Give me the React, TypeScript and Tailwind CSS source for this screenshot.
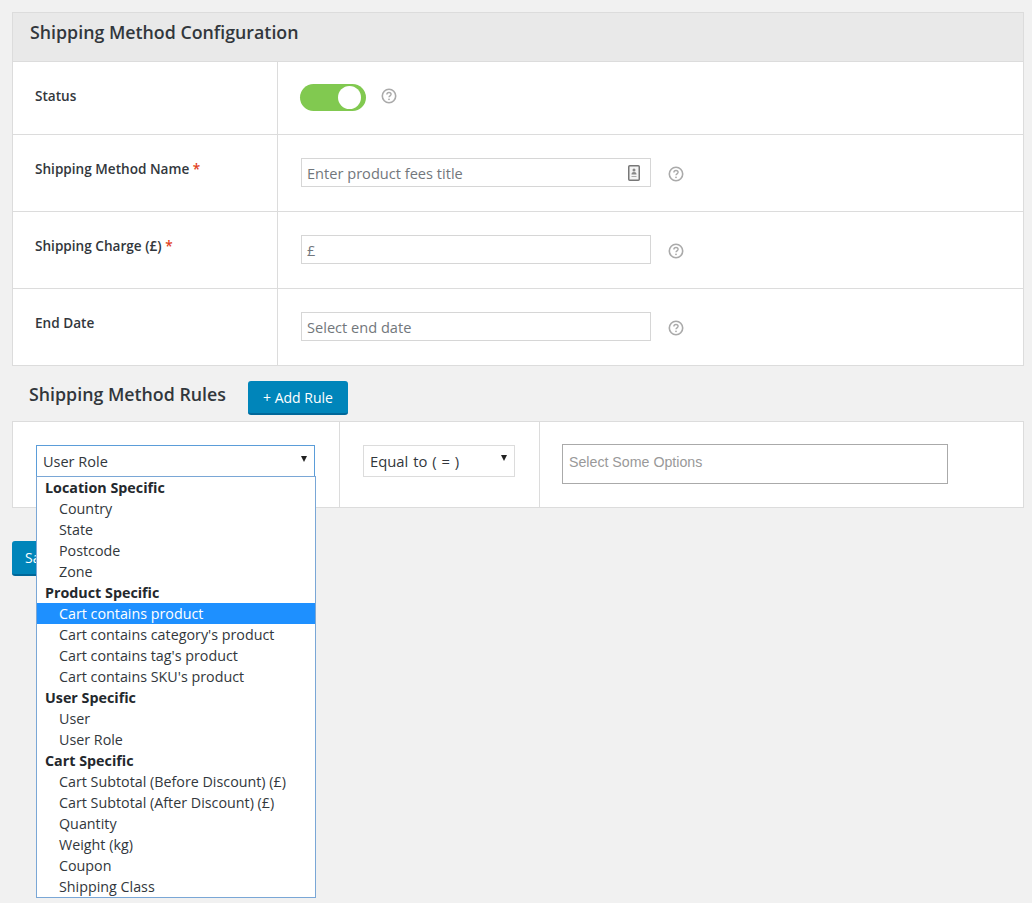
const FONT = "font-['Open_Sans','Noto_Sans',sans-serif]";

type Group = { label: string; items: string[] };

const GROUPS: Group[] = [
  { label: "Location Specific", items: ["Country", "State", "Postcode", "Zone"] },
  {
    label: "Product Specific",
    items: [
      "Cart contains product",
      "Cart contains category's product",
      "Cart contains tag's product",
      "Cart contains SKU's product",
    ],
  },
  { label: "User Specific", items: ["User", "User Role"] },
  {
    label: "Cart Specific",
    items: [
      "Cart Subtotal (Before Discount) (£)",
      "Cart Subtotal (After Discount) (£)",
      "Quantity",
      "Weight (kg)",
      "Coupon",
      "Shipping Class",
    ],
  },
];

function Help() {
  return (
    <svg width="16" height="16" viewBox="0 0 16 16" fill="none" className="shrink-0" aria-hidden>
      <circle cx="8" cy="8" r="6.7" stroke="#aaa" strokeWidth="1.6" />
      <path d="M5.9 6.4c0-1.2 1-1.9 2.1-1.9s2.1.7 2.1 1.8c0 1.5-2.1 1.6-2.1 3" stroke="#aaa" strokeWidth="1.4" />
      <circle cx="8" cy="11.3" r=".9" fill="#aaa" />
    </svg>
  );
}

function ContactIcon() {
  return (
    <svg width="12" height="16" viewBox="0 0 12 16" fill="none" aria-hidden>
      <rect x=".75" y=".75" width="10.5" height="14.5" rx="1" fill="#f4f4f4" stroke="#777" strokeWidth="1.5" />
      <circle cx="6" cy="5" r="1.5" fill="#888" />
      <path d="M3.5 9.5c0-1.6 1-2.4 2.5-2.4s2.5.8 2.5 2.4z" fill="#888" />
      <path d="M3.5 11.5h5" stroke="#aaa" />
    </svg>
  );
}

function Row({
  label,
  required,
  height,
  last,
  children,
}: {
  label: string;
  required?: boolean;
  height: string;
  last?: boolean;
  children: React.ReactNode;
}) {
  return (
    <div className={`flex ${height} ${last ? "" : "border-b border-[#dcdcdc]"}`}>
      <div className="w-[265px] shrink-0 border-r border-[#dcdcdc] pl-[22px] pt-[25px] text-[13.6px] leading-[18px] font-semibold text-[#32373c]">
        {label}
        {required ? <span className="text-[#e2401c]"> *</span> : null}
      </div>
      <div className="flex flex-1 items-start pl-[23px]">{children}</div>
    </div>
  );
}

function TextField({ placeholder, icon }: { placeholder: string; icon?: boolean }) {
  return (
    <div className="mt-[23px] flex items-center gap-[17px]">
      <div className="flex h-[29px] w-[350px] items-center justify-between border border-[#d6d6d6] bg-white pt-[2px] pr-[10px] pl-[5px] text-[14.6px] text-[#72777c]">
        <span>{placeholder}</span>
        {icon ? (
          <span className="-mt-[2px]">
            <ContactIcon />
          </span>
        ) : null}
      </div>
      <div className="pt-[2px]">
        <Help />
      </div>
    </div>
  );
}

function Arrow() {
  return (
    <svg width="6" height="6" viewBox="0 0 6 6" className="mb-[7px]" aria-hidden>
      <path d="M0 0h6L3 6z" fill="#222" />
    </svg>
  );
}

export default function App() {
  return (
    <div className={`${FONT} h-[903px] overflow-hidden bg-[#f1f1f1] pt-3 pr-2 pl-3`}>
      <div className="border border-[#dcdcdc] bg-white">
        <div className="h-[49px] border-b border-[#dcdcdc] bg-[#e9e9e9] pt-[7px] pl-[17px] text-[17.8px] leading-[24px] font-semibold text-[#32373c]">
          Shipping Method Configuration
        </div>
        <Row label="Status" height="h-[73px]">
          <div className="mt-[22px] -ml-px flex items-start gap-[15px]">
            <div className="flex h-[27px] w-[66px] items-center justify-end rounded-full bg-[#81c950] pr-[5px]">
              <div className="h-[23px] w-[23px] rounded-full bg-white" />
            </div>
            <div className="pt-[4px]">
              <Help />
            </div>
          </div>
        </Row>
        <Row label="Shipping Method Name" required height="h-[77px]">
          <TextField placeholder="Enter product fees title" icon />
        </Row>
        <Row label="Shipping Charge (£)" required height="h-[77px]">
          <TextField placeholder="£" />
        </Row>
        <Row label="End Date" height="h-[76px]" last>
          <TextField placeholder="Select end date" />
        </Row>
      </div>

      <div className="flex items-start pt-[15px] pb-[6px] pl-[17px]">
        <h2 className="mt-px w-[219px] text-[17.8px] leading-[24px] font-semibold text-[#32373c]">
          Shipping Method Rules
        </h2>
        <button className="h-[34px] w-[100px] rounded-[3px] border-b-2 border-[#006799] bg-[#0085ba] text-[14px] text-white">
          + Add Rule
        </button>
      </div>

      <div className="relative flex h-[87px] border border-[#dcdcdc] bg-white">
        <div className="w-[327px] shrink-0 border-r border-[#dcdcdc] pt-[23px] pl-[23px]">
          <div className="flex h-[32px] w-[279px] items-center justify-between border border-[#5b9dd9] pt-[2px] pr-[7px] pl-[6px] text-[14.5px] text-[#32373c]">
            <span>User Role</span>
            <Arrow />
          </div>
        </div>
        <div className="w-[200px] shrink-0 border-r border-[#dcdcdc] pt-[23px] pl-[23px]">
          <div className="flex h-[32px] w-[152px] items-center justify-between border border-[#dcdcdc] pr-[7px] pl-[6px] text-[14.8px] text-[#32373c]">
            <span className="[word-spacing:1px]">Equal to ( = )</span>
            <Arrow />
          </div>
        </div>
        <div className="pt-[22px] pl-[22px]">
          <div className="flex h-[40px] w-[386px] items-start border border-[#aaa] pt-[8px] pl-[6px] font-['Liberation_Sans',sans-serif] text-[14.2px] leading-[18px] text-[#999]">
            Select Some Options
          </div>
        </div>

        {/* open list lies over the card and the save button */}
        <div className="absolute top-[54px] left-[23px] z-10 w-[280px] border border-[#7aa7d6] bg-white text-[14.3px] leading-[21px] text-[#32373c]">
          {GROUPS.map((group) => (
            <div key={group.label}>
              <div className="pl-[8px] font-bold text-[#23282d]">{group.label}</div>
              {group.items.map((item) => (
                <div
                  key={item}
                  className={`pl-[22px] ${item === "Cart contains product" ? "bg-[#1e90ff] text-white" : ""}`}
                >
                  {item}
                </div>
              ))}
            </div>
          ))}
        </div>
      </div>

      <button className="mt-[33px] h-[35px] w-[100px] rounded-[3px] border-b-2 border-[#006799] bg-[#0085ba] pl-[13px] text-left text-[14px] text-white">
        Save
      </button>
    </div>
  );
}
